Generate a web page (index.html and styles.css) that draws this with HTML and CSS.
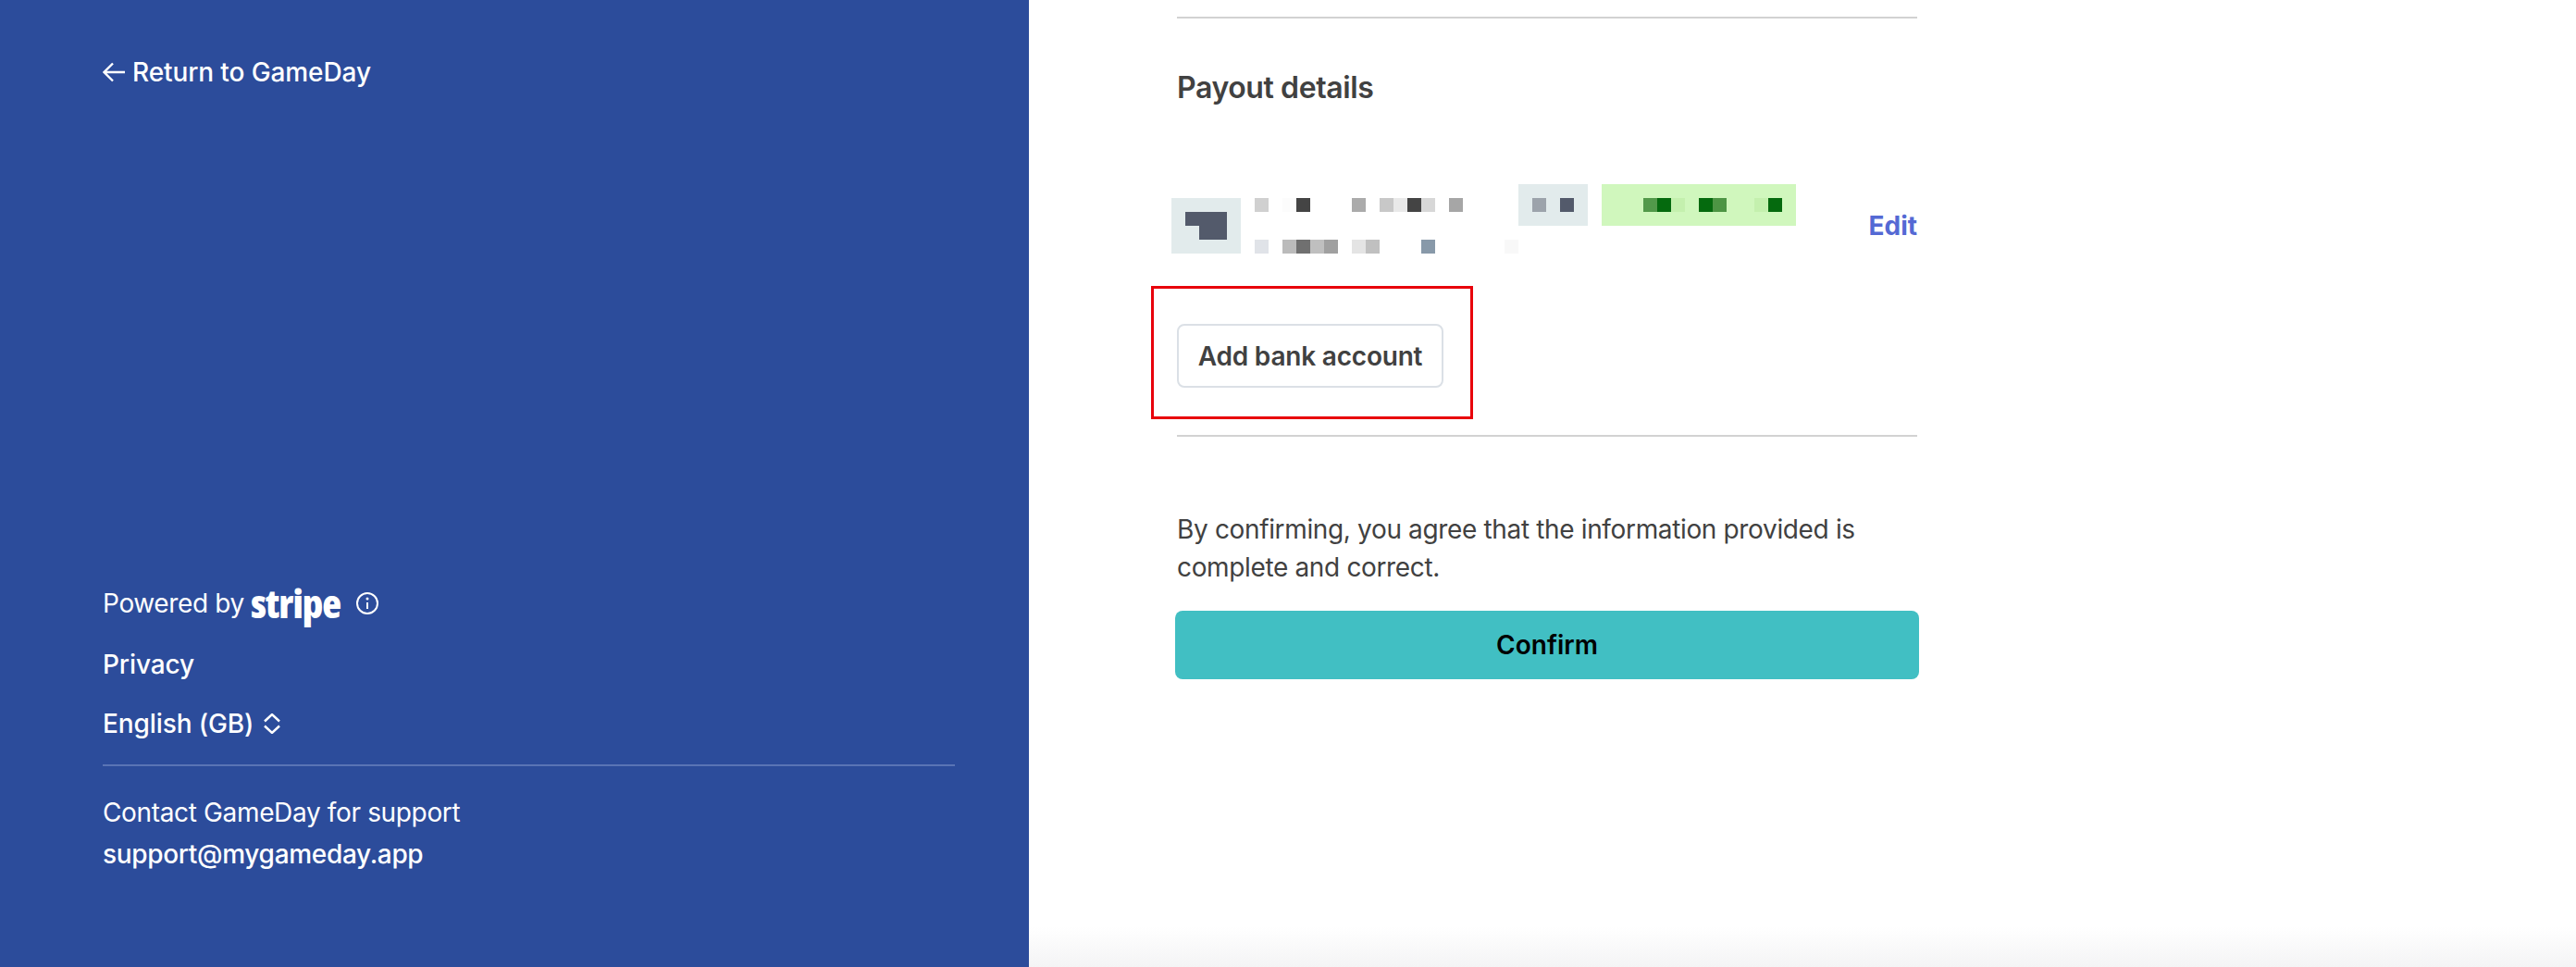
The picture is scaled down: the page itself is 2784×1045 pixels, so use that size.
FILE: index.html
```html
<!DOCTYPE html>
<html>
<head>
  <link rel="stylesheet" href="styles.css">
</head>
<body>

  <aside class="sidebar">
    <a class="back-link">
      <svg class="back-icon" width="24" height="22" viewBox="0 0 24 22"><path d="M11 1.500 1.500 11l9.500 9.500M1.500 11H24"/></svg>
      Return to GameDay
    </a>

    <div class="sidebar-bottom">
      <div class="powered">
        <span>Powered by</span>
        <span class="stripe-logo">stripe</span>
        <svg class="info-icon" width="24" height="24" viewBox="0 0 24 24">
          <circle cx="12" cy="12" r="11"/>
          <circle class="info-dot" cx="12" cy="7" r="1.500"/>
          <path d="M12 11v7"/>
        </svg>
      </div>
      <a class="side-link privacy">Privacy</a>
      <div class="side-link language">
        English (GB)
        <svg class="chevrons" width="18" height="22" viewBox="0 0 18 22"><path d="M1 8.500 9 1l8 7.500M1 13.500 9 21l8-7.500"/></svg>
      </div>
      <div class="side-rule"></div>
      <p class="support">Contact GameDay for support</p>
      <a class="support-mail">support@mygameday.app</a>
    </div>
  </aside>

  <main class="content">
    <div class="column">
      <hr class="rule rule-top">
      <h2 class="section-title">Payout details</h2>

      <div class="account-row">
        <!-- account details are pixelated in the original -->
        <svg class="mosaic" width="675" height="75" viewBox="0 0 675 75" shape-rendering="crispEdges">
          <rect x="0" y="15" width="75" height="60" fill="#e2ebec"/>
          <rect x="15" y="30" width="45" height="15" fill="#535a6b"/>
          <rect x="30" y="45" width="30" height="15" fill="#535a6b"/>

          <rect x="90" y="15" width="15" height="15" fill="#d0d0d0"/>
          <rect x="120" y="15" width="15" height="15" fill="#fcfcfc"/>
          <rect x="135" y="15" width="15" height="15" fill="#444444"/>
          <rect x="195" y="15" width="15" height="15" fill="#ababab"/>
          <rect x="225" y="15" width="15" height="15" fill="#c8c8c8"/>
          <rect x="240" y="15" width="15" height="15" fill="#e9e9e9"/>
          <rect x="255" y="15" width="15" height="15" fill="#444444"/>
          <rect x="270" y="15" width="15" height="15" fill="#d7d7d7"/>
          <rect x="300" y="15" width="15" height="15" fill="#a6a6a6"/>

          <rect x="90" y="60" width="15" height="15" fill="#e0e3e8"/>
          <rect x="120" y="60" width="15" height="15" fill="#bbbbbb"/>
          <rect x="135" y="60" width="15" height="15" fill="#707070"/>
          <rect x="150" y="60" width="15" height="15" fill="#bfbfbf"/>
          <rect x="165" y="60" width="15" height="15" fill="#a0a0a0"/>
          <rect x="195" y="60" width="15" height="15" fill="#e4e4e4"/>
          <rect x="210" y="60" width="15" height="15" fill="#c0c0c0"/>
          <rect x="270" y="60" width="15" height="15" fill="#8899a9"/>
          <rect x="360" y="60" width="15" height="15" fill="#f8f8f8"/>

          <rect x="375" y="0" width="75" height="45" fill="#e2ebec"/>
          <rect x="390" y="15" width="15" height="15" fill="#9ca3ab"/>
          <rect x="420" y="15" width="15" height="15" fill="#535a6b"/>

          <rect x="465" y="0" width="210" height="45" fill="#d0f7bd"/>
          <rect x="510" y="15" width="15" height="15" fill="#52994a"/>
          <rect x="525" y="15" width="15" height="15" fill="#056a0e"/>
          <rect x="540" y="15" width="15" height="15" fill="#c4f0ae"/>
          <rect x="570" y="15" width="15" height="15" fill="#056a0e"/>
          <rect x="585" y="15" width="15" height="15" fill="#4d9544"/>
          <rect x="630" y="15" width="15" height="15" fill="#c4f0ae"/>
          <rect x="645" y="15" width="15" height="15" fill="#056a0e"/>
        </svg>
        <a class="edit-link">Edit</a>
      </div>

      <div class="add-bank">
        <button class="add-bank-btn" type="button">Add bank account</button>
        <div class="highlight"></div>
      </div>

      <hr class="rule rule-bottom">

      <p class="agree">By confirming, you agree that the information provided is complete and correct.</p>
      <button class="confirm-btn" type="button">Confirm</button>
    </div>
  </main>

</body>
</html>
```

FILE: styles.css
```css
html, body {
  height: 100%;
}
body {
  margin: 0;
  display: flex;
  overflow: hidden;
  background-color: #fff;
  font-family: Inter, "Liberation Sans", sans-serif;
  font-size: 28px;
  line-height: 40px;
  letter-spacing: -0.35px;
}

/* left panel */
.sidebar {
  width: 1112px;
  flex-shrink: 0;
  box-sizing: border-box;
  padding: 58px 80px 102px 111px;
  display: flex;
  flex-direction: column;
  justify-content: space-between;
  background-color: #2c4c9b;
  color: #fff;
}
.back-link {
  display: flex;
  align-items: center;
  gap: 8px;
  font-weight: 450;
  letter-spacing: -0.1px;
}
.back-icon, .chevrons, .info-icon {
  fill: none;
  stroke: #fff;
  stroke-width: 2.4;
  flex-shrink: 0;
}
.powered {
  display: flex;
  align-items: center;
}
.stripe-logo {
  margin-left: 7px;
  font-family: "Open Sans", sans-serif;
  font-size: 43px;
  font-weight: 800;
  font-stretch: 75%;
  letter-spacing: -1px;
}
.info-icon {
  margin-left: 17px;
  stroke-width: 2;
}
.info-dot {
  fill: #fff;
  stroke: none;
}
.side-link {
  display: block;
  font-weight: 450;
  letter-spacing: -0.1px;
}
.privacy {
  margin-top: 26px;
}
.language {
  margin-top: 24px;
  display: flex;
  align-items: center;
  gap: 11px;
}
.side-rule {
  height: 2px;
  margin-top: 24px;
  background-color: #5a74b5;
}
.support {
  margin: 30px 0 0;
}
.support-mail {
  display: block;
  margin-top: 5px;
  font-weight: 450;
  letter-spacing: -0.32px;
}

/* right panel */
.content {
  flex: 1;
  padding-left: 160px;
  background: linear-gradient(#fff, #f4f4f5) bottom / 100% 44px no-repeat;
  color: #414141;
}
.column {
  width: 800px;
}
.rule {
  height: 2px;
  margin: 0;
  border: 0;
  background-color: #d2d2d2;
}
.rule-top {
  margin-top: 18px;
}
.rule-bottom {
  margin-top: 51px;
}
.section-title {
  margin: 55px 0 0;
  font-size: 32px;
  line-height: 40px;
  font-weight: 600;
  letter-spacing: -0.4px;
}
.account-row {
  display: flex;
  justify-content: space-between;
  margin: 84px 0 0 -6px;
}
.mosaic {
  display: block;
}
.edit-link {
  padding-top: 25px;
  font-weight: 700;
  letter-spacing: 0;
  color: #5469d4;
}
.add-bank {
  position: relative;
  margin-top: 76px;
}
.add-bank-btn {
  display: block;
  width: 288px;
  height: 69px;
  padding: 0;
  box-sizing: border-box;
  border: 2px solid #dbe0e6;
  border-radius: 8px;
  background-color: #fff;
  font: 600 28px Inter, "Liberation Sans", sans-serif;
  letter-spacing: -0.2px;
  color: #414141;
}
/* red annotation round the button */
.highlight {
  position: absolute;
  left: -28px;
  top: -41px;
  width: 348px;
  height: 144px;
  box-sizing: border-box;
  border: 3px solid #e8000b;
}
.agree {
  margin: 80px 0 0;
  line-height: 41px;
}
.confirm-btn {
  display: block;
  width: 804px;
  height: 74px;
  margin: 26px 0 0 -2px;
  border: 0;
  border-radius: 8px;
  background-color: #41bfc3;
  font: 600 28px Inter, "Liberation Sans", sans-serif;
  color: #000;
}
```
